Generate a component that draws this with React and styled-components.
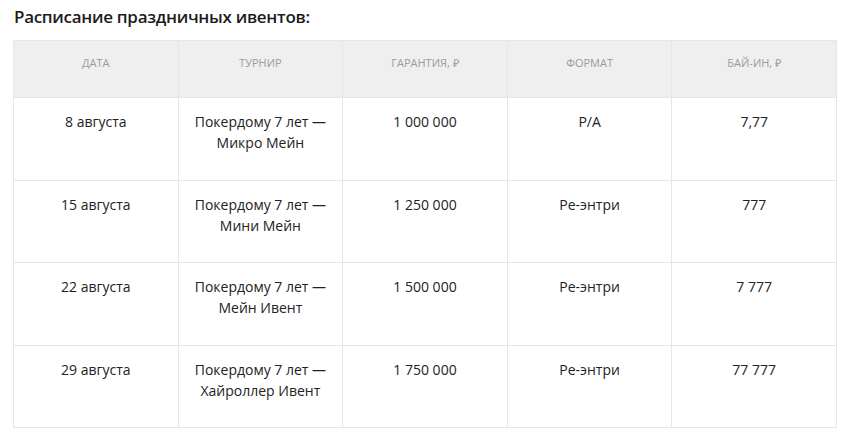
import React from 'react';
import styled, { createGlobalStyle } from 'styled-components';

const GlobalStyle = createGlobalStyle`
    body {
        margin: 0;
        background: #ffffff;
        font-family: "Open Sans", "Liberation Sans", sans-serif;
    }
`;

const Page = styled.div`
    padding: 0 17px 0 13px;
`;

const Title = styled.h2`
    margin: 0;
    height: 40px;
    padding-top: 6px;
    box-sizing: border-box;
    font-size: 17px;
    line-height: 22px;
    font-weight: 600;
    letter-spacing: -0.3px;
    color: #1c1c1c;
    padding-left: 1px;
`;

const Grid = styled.div`
    display: grid;
    grid-template-columns: repeat(5, 1fr);
    border-top: 1px solid #e6e6e6;
    border-left: 1px solid #e6e6e6;
`;

const Cell = styled.div`
    border-right: 1px solid #e6e6e6;
    border-bottom: 1px solid #e6e6e6;
    text-align: center;
    box-sizing: border-box;
    height: ${p => p.$head ? '57px' : '82.5px'};
    padding: ${p => p.$head ? '14px 10px 0' : '13px 10px 0'};
    background: ${p => p.$head ? '#efefef' : '#ffffff'};
    color: ${p => p.$head ? '#9b9b9b' : '#222222'};
    font-size: ${p => p.$head ? '11px' : '14px'};
    line-height: ${p => p.$head ? '16px' : '21px'};
`;

const headers = ['ДАТА', 'ТУРНИР', 'ГАРАНТИЯ, ₽', 'ФОРМАТ', 'БАЙ-ИН, ₽'];

const rows = [
    ['8 августа', 'Микро Мейн', '1 000 000', 'Р/А', '7,77'],
    ['15 августа', 'Мини Мейн', '1 250 000', 'Ре-энтри', '777'],
    ['22 августа', 'Мейн Ивент', '1 500 000', 'Ре-энтри', '7 777'],
    ['29 августа', 'Хайроллер Ивент', '1 750 000', 'Ре-энтри', '77 777'],
];

const App = () => {
    return (
        <Page>
            <GlobalStyle />
            <Title>Расписание праздничных ивентов:</Title>
            <Grid>
                {headers.map(h => <Cell $head key={h}>{h}</Cell>)}
                {rows.map(([date, name, guarantee, format, buyin]) => (
                    <React.Fragment key={date}>
                        <Cell>{date}</Cell>
                        <Cell>Покердому 7 лет —<br />{name}</Cell>
                        <Cell>{guarantee}</Cell>
                        <Cell>{format}</Cell>
                        <Cell>{buyin}</Cell>
                    </React.Fragment>
                ))}
            </Grid>
        </Page>
    );
};

export default App;
